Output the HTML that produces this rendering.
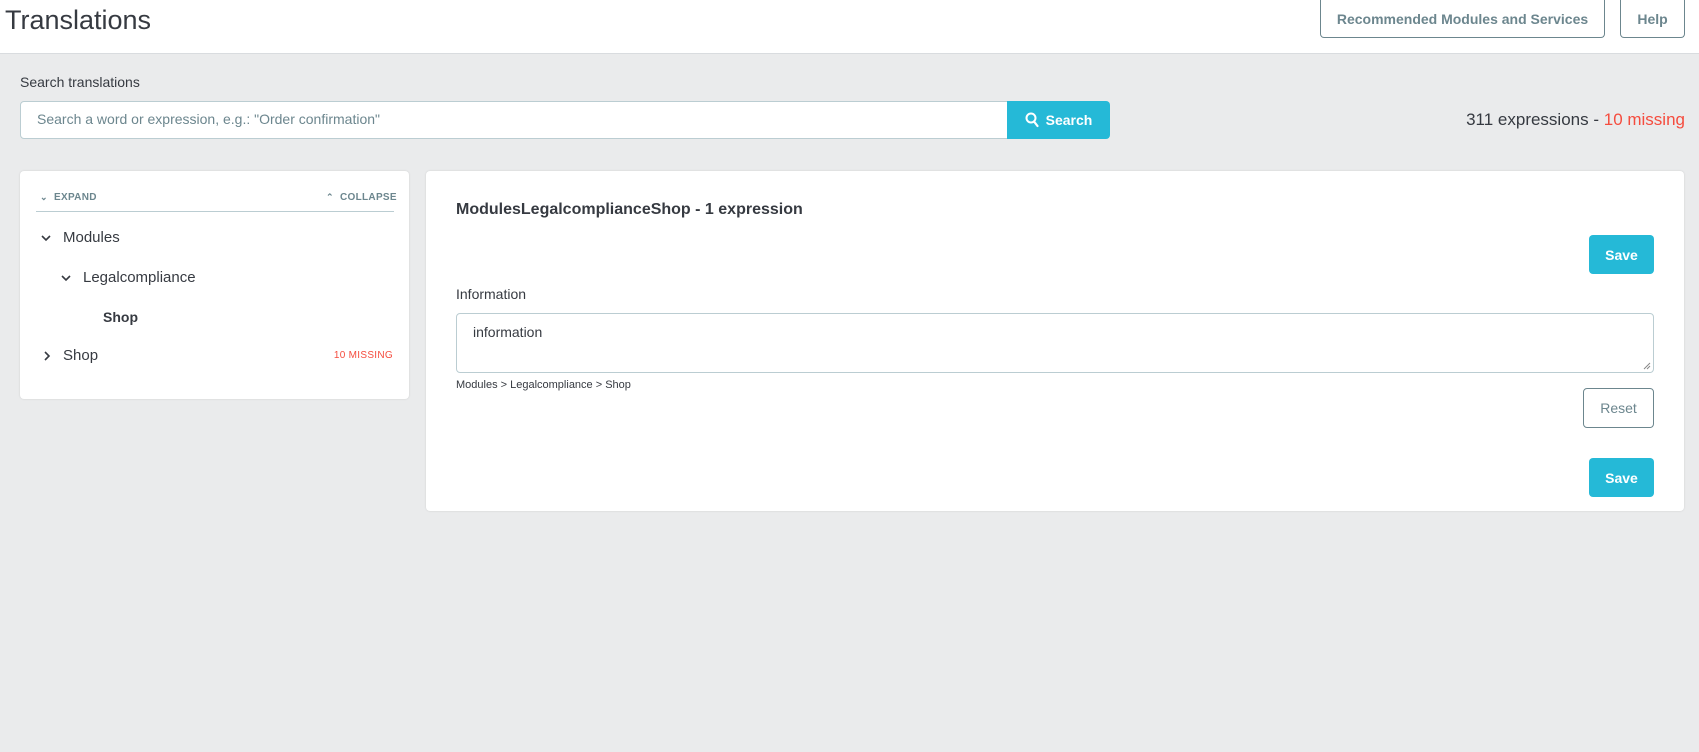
<!DOCTYPE html>
<html><head><meta charset="utf-8"><style>
*{box-sizing:border-box;margin:0;padding:0}
body{width:1699px;height:752px;background:#eaebec;font-family:"Liberation Sans",sans-serif;color:#363a41;position:relative;overflow:hidden}
.abs{position:absolute}
.hdr{left:0;top:0;width:1699px;height:54px;background:#fff;border-bottom:1px solid #d9dcdf}
.btn-o{border:1px solid #6c868e;border-radius:4px;background:#fff;color:#6c868e;font-size:14px;font-weight:bold;display:flex;align-items:center;justify-content:center}
.btn-b{background:#25b9d7;color:#fff;border-radius:4px;font-weight:bold;font-size:14px;display:flex;align-items:center;justify-content:center}
.panel{background:#fff;border-radius:4px;box-shadow:0 0 2px rgba(0,0,0,.12)}
.t{white-space:nowrap}
</style></head><body>
<div class="abs hdr"></div>
<div class="abs t" style="left:5px;top:5px;font-size:27px;color:#363a41">Translations</div>
<div class="abs btn-o" style="left:1320px;top:0;width:285px;height:38px;border-top:none;border-radius:0 0 4px 4px">Recommended Modules and Services</div>
<div class="abs btn-o" style="left:1620px;top:0;width:65px;height:38px;border-top:none;border-radius:0 0 4px 4px">Help</div>

<div class="abs t" style="left:20px;top:74px;font-size:14px">Search translations</div>
<div class="abs" style="left:20px;top:101px;width:988px;height:38px;background:#fff;border:1px solid #bbcdd2;border-radius:4px 0 0 4px"></div>
<div class="abs t" style="left:37px;top:111px;font-size:14px;color:#6c868e">Search a word or expression, e.g.: "Order confirmation"</div>
<div class="abs btn-b" style="left:1007px;top:101px;width:103px;height:38px;border-radius:0 4px 4px 0"><svg width="14" height="16" viewBox="0 0 14 16" style="margin-right:7px"><circle cx="6" cy="6" r="4.5" fill="none" stroke="#fff" stroke-width="2"/><path d="M9 9.5L12.5 14" stroke="#fff" stroke-width="2.2" stroke-linecap="round"/></svg>Search</div>
<div class="abs t" style="right:14px;top:110px;font-size:17px">311 expressions - <span style="color:#f54c3e">10 missing</span></div>

<div class="abs panel" style="left:20px;top:171px;width:389px;height:228px"></div>
<div class="abs t" style="left:40px;top:192px;font-size:10px;font-weight:bold;color:#6c868e;letter-spacing:.3px"><span style="font-size:9px">&#8964;</span>&nbsp; EXPAND</div>
<div class="abs t" style="left:326px;top:192px;font-size:10px;font-weight:bold;color:#6c868e;letter-spacing:.3px"><span style="font-size:9px">&#8963;</span>&nbsp; COLLAPSE</div>
<div class="abs" style="left:36px;top:211px;width:358px;height:1px;background:#bbcdd2"></div>
<svg class="abs" style="left:41px;top:234px" width="10" height="8"><path d="M1 2l4 4 4-4" fill="none" stroke="#363a41" stroke-width="1.6"/></svg>
<div class="abs t" style="left:63px;top:229px;font-size:15px">Modules</div>
<svg class="abs" style="left:61px;top:274px" width="10" height="8"><path d="M1 2l4 4 4-4" fill="none" stroke="#363a41" stroke-width="1.6"/></svg>
<div class="abs t" style="left:83px;top:269px;font-size:15px">Legalcompliance</div>
<div class="abs t" style="left:103px;top:309px;font-size:14px;font-weight:bold">Shop</div>
<svg class="abs" style="left:43px;top:351px" width="8" height="10"><path d="M2 1l4 4-4 4" fill="none" stroke="#363a41" stroke-width="1.6"/></svg>
<div class="abs t" style="left:63px;top:347px;font-size:15px">Shop</div>
<div class="abs t" style="right:1306px;top:350px;font-size:10px;color:#f54c3e;letter-spacing:.3px">10 MISSING</div>

<div class="abs panel" style="left:426px;top:171px;width:1258px;height:340px"></div>
<div class="abs t" style="left:456px;top:201px;font-size:16px;font-weight:bold">ModulesLegalcomplianceShop - 1 expression</div>
<div class="abs btn-b" style="left:1589px;top:235px;width:65px;height:39px">Save</div>
<div class="abs t" style="left:456px;top:286px;font-size:14px">Information</div>
<div class="abs" style="left:456px;top:313px;width:1198px;height:60px;background:#fff;border:1px solid #bbcdd2;border-radius:4px"></div>
<div class="abs t" style="left:473px;top:324px;font-size:14px">information</div>
<svg class="abs" style="left:1643px;top:362px" width="8" height="8"><path d="M1 7L7 1M4 7L7 4" stroke="#888" stroke-width="1"/></svg>
<div class="abs t" style="left:456px;top:379px;font-size:11px">Modules &gt; Legalcompliance &gt; Shop</div>
<div class="abs btn-o" style="left:1583px;top:388px;width:71px;height:40px;font-weight:normal;font-size:14px">Reset</div>
<div class="abs btn-b" style="left:1589px;top:458px;width:65px;height:39px">Save</div>
</body></html>
